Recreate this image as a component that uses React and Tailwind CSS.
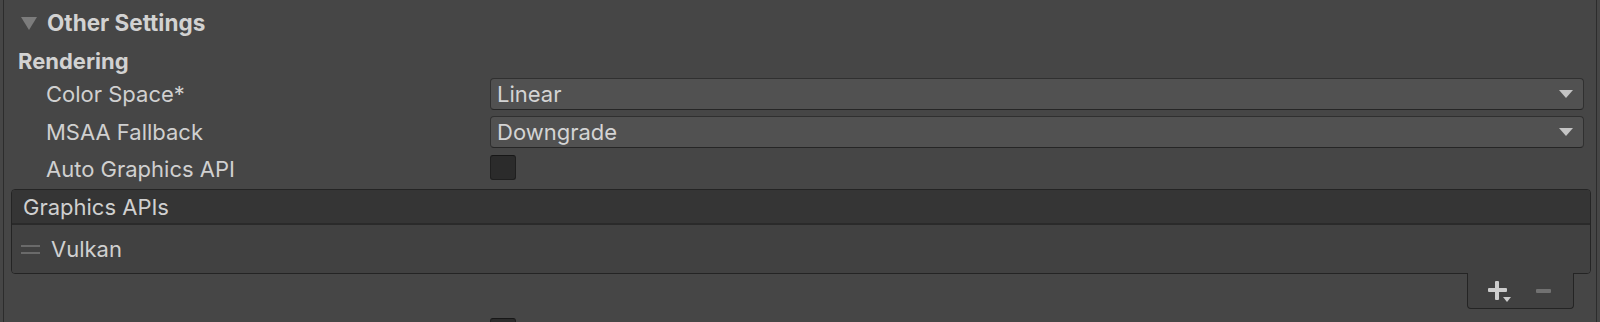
import { useState } from "react";

/* Unity-style "Other Settings" inspector section */

function Dropdown({ value }) {
  return (
    <div className="flex h-[32px] flex-1 items-center justify-between rounded-[4px] border border-[#303030] border-b-[#262626] bg-[#515151] pl-[6px] pr-[10px]">
      <span className="text-[22px] leading-[32px] text-[#d4d4d4]">{value}</span>
      <svg width="14" height="9" viewBox="0 0 14 9">
        <polygon points="0,0 14,0 7,8" fill="#c4c4c4" />
      </svg>
    </div>
  );
}

function Checkbox({ checked, onChange }) {
  return (
    <button
      onClick={onChange}
      className="h-[25px] w-[26px] rounded-[3px] border border-[#1f1f1f] border-t-[#171717] bg-[#2b2b2b]"
    >
      {checked && <span className="text-[#d4d4d4]">✓</span>}
    </button>
  );
}

function FieldRow({ label, children, className = "" }) {
  return (
    <div className={"flex h-[32px] items-center pr-[12px] " + className}>
      <div className="w-[486px] shrink-0 pl-[42px] text-[22px] leading-[32px] text-[#d0d0d0]">
        {label}
      </div>
      <div className="flex flex-1 items-center">{children}</div>
    </div>
  );
}

export default function App() {
  const [autoApi, setAutoApi] = useState(false);
  const [other, setOther] = useState(false);

  return (
    <div
      className="h-[322px] w-[1600px] overflow-hidden bg-[#464646]"
      style={{ fontFamily: "Inter, 'Noto Sans', sans-serif" }}
    >
      <div className="ml-[3px] mr-[3px] h-full border-x border-[#2c2c2c] pt-[7px]">
        {/* FOLDOUT HEADER */}
        <div className="flex h-[32px] items-center">
          <svg width="16" height="14" viewBox="0 0 16 14" className="ml-[17px] mr-[10px]">
            <polygon points="0,1 16,1 8,14" fill="#7c7c7c" />
          </svg>
          <span className="text-[22.5px] font-bold leading-[32px] text-[#d2d2d2]">
            Other Settings
          </span>
        </div>

        {/* SECTION LABEL */}
        <div className="mt-[6px] h-[32px] pl-[14px] text-[22px] font-bold leading-[32px] text-[#d2d2d2]">
          Rendering
        </div>

        <FieldRow label="Color Space*" className="mt-[1px]">
          <Dropdown value="Linear" />
        </FieldRow>

        <FieldRow label="MSAA Fallback" className="mt-[6px]">
          <Dropdown value="Downgrade" />
        </FieldRow>

        <FieldRow label="Auto Graphics API" className="mt-[5px] items-start">
          <div className="pt-[2px]">
            <Checkbox checked={autoApi} onChange={() => setAutoApi(!autoApi)} />
          </div>
        </FieldRow>

        {/* GRAPHICS APIS LIST */}
        <div className="ml-[7px] mr-[5px] mt-[4px]">
          <div className="overflow-hidden rounded-[4px] border border-[#242424]">
            <div className="flex h-[35px] items-center border-b-2 border-[#2a2a2a] bg-[#353535] pl-[11px] text-[22px] leading-[32px] text-[#d0d0d0]">
              Graphics APIs
            </div>
            <div className="flex h-[48px] items-center bg-[#414141]">
              <div className="ml-[9px] mr-[11px] flex w-[19px] flex-col gap-[5px]">
                <div className="h-[2px] bg-[#6a6a6a]" />
                <div className="h-[2px] bg-[#6a6a6a]" />
              </div>
              <span className="text-[22px] leading-[32px] text-[#d0d0d0]">Vulkan</span>
            </div>
          </div>

          {/* ADD / REMOVE FOOTER */}
          <div className="flex justify-end pr-[17px]">
            <div className="-mt-px flex h-[36px] w-[107px] items-center rounded-b-[4px] border border-t-0 border-[#242424] bg-[#414141]">
              <div className="relative ml-[20px] h-[19px] w-[19px]">
                <div className="absolute left-[7px] top-0 h-[19px] w-[4px] rounded-[1px] bg-[#cdcdcd]" />
                <div className="absolute left-0 top-[7px] h-[4px] w-[19px] rounded-[1px] bg-[#cdcdcd]" />
                <svg
                  width="8"
                  height="5"
                  viewBox="0 0 8 5"
                  className="absolute left-[15px] top-[16px]"
                >
                  <polygon points="0,0 8,0 4,5" fill="#cdcdcd" />
                </svg>
              </div>
              <div className="ml-[29px] h-[4px] w-[15px] rounded-[1px] bg-[#717171]" />
            </div>
          </div>
        </div>

        {/* NEXT ROW (cut off) */}
        <div className="mt-[9px] flex pl-[486px]">
          <Checkbox checked={other} onChange={() => setOther(!other)} />
        </div>
      </div>
    </div>
  );
}
